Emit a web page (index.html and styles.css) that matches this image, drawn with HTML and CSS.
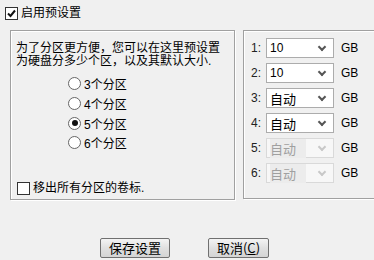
FILE: index.html
```html
<!DOCTYPE html>
<html lang="zh-CN">
<head>
  <meta charset="UTF-8" />
  <title>预设置</title>
  <link rel="stylesheet" href="styles.css">
</head>
<body>

  <label class="check enable">
    <span class="box">
      <svg width="11" height="11" viewBox="0 0 11 11"><polyline points="2,5.5 4.5,8 9,2.5" fill="none" stroke="#111" stroke-width="2"/></svg>
    </span>
    启用预设置
  </label>

  <div class="panes">
    <div class="group left">
      <p class="intro">为了分区更方便，您可以在这里预设置<br>为硬盘分多少个区，以及其默认大小.</p>

      <div class="radios">
        <div class="radio"><span class="dot"></span>3个分区</div>
        <div class="radio"><span class="dot"></span>4个分区</div>
        <div class="radio on"><span class="dot"></span>5个分区</div>
        <div class="radio"><span class="dot"></span>6个分区</div>
      </div>

      <label class="check remove">
        <span class="box"></span>
        移出所有分区的卷标.
      </label>
    </div>

    <div class="group right">
      <div class="row"><span class="num">1:</span><div class="combo"><span class="val">10</span><span class="arrow"></span></div><span class="unit">GB</span></div>
      <div class="row"><span class="num">2:</span><div class="combo"><span class="val">10</span><span class="arrow"></span></div><span class="unit">GB</span></div>
      <div class="row"><span class="num">3:</span><div class="combo"><span class="val cn">自动</span><span class="arrow"></span></div><span class="unit">GB</span></div>
      <div class="row"><span class="num">4:</span><div class="combo"><span class="val cn">自动</span><span class="arrow"></span></div><span class="unit">GB</span></div>
      <div class="row"><span class="num">5:</span><div class="combo off"><span class="val cn">自动</span><span class="arrow"></span></div><span class="unit">GB</span></div>
      <div class="row"><span class="num">6:</span><div class="combo off"><span class="val cn">自动</span><span class="arrow"></span></div><span class="unit">GB</span></div>
    </div>
  </div>

  <div class="actions">
    <button class="btn save">保存设置</button>
    <button class="btn cancel">取消(<u>C</u>)</button>
  </div>

</body>
</html>
```

FILE: styles.css
```css
body {
  margin: 0;
  width: 374px;
  height: 260px;
  overflow: hidden;
  background: #f0f0f0;
  font-family: "Liberation Sans", "Noto Sans CJK SC", sans-serif;
  font-size: 12px;
  color: #000;
}

.check {
  display: flex;
  align-items: center;
  gap: 3px;
  line-height: 14px;
}

.box {
  width: 11px;
  height: 11px;
  border: 1px solid #333;
  background: #fff;
  display: flex;
}

.enable {
  padding: 6px 0 0 5px;
}

.panes {
  display: flex;
  gap: 8px;
  margin-top: 10px;
  padding-left: 10px;
}

.group {
  border: 1px solid #a0a0a0;
  box-shadow: inset 1px 1px 0 #fff, 1px 1px 0 #fff;
  box-sizing: border-box;
}

.left {
  width: 225px;
  height: 170px;
  padding: 11px 0 0 5px;
  display: flex;
  flex-direction: column;
}

.intro {
  margin: 0;
  line-height: 13px;
}

.radios {
  margin: 6px 0 0 52px;
}

.radio {
  display: flex;
  align-items: center;
  gap: 3px;
  height: 19.7px;
}

.dot {
  width: 11px;
  height: 11px;
  border: 1px solid #666;
  border-radius: 50%;
  background: #fff;
  display: flex;
  align-items: center;
  justify-content: center;
}

.radio.on .dot::after {
  content: "";
  width: 6px;
  height: 6px;
  border-radius: 50%;
  background: #111;
}

.remove {
  margin-top: auto;
  margin-bottom: 4px;
  padding-left: 1px;
}

.right {
  flex: 1;
  height: 169px;
  margin-right: -10px;
  padding: 7px 0 0 7px;
  display: flex;
  flex-direction: column;
  gap: 5px;
}

.row {
  display: flex;
  align-items: center;
  height: 20px;
}

.num {
  width: 15px;
  color: #222;
}

.combo {
  width: 68px;
  height: 20px;
  box-sizing: border-box;
  border: 1px solid #acacac;
  background: #fff;
  display: flex;
  align-items: center;
  justify-content: space-between;
  padding: 0 4px 0 3px;
}

.val {
  font-size: 12px;
}

.val.cn {
  font-size: 13px;
}

.arrow {
  width: 4px;
  height: 4px;
  border-right: 2px solid #555;
  border-bottom: 2px solid #555;
  transform: rotate(45deg);
  margin: -3px 4px 0 0;
}

.combo.off {
  border-color: #d9d9d9;
  background: #f7f7f7;
}

.combo.off .val {
  color: #a0a0a0;
  background: #ececec;
  padding-right: 10px;
}

.combo.off .arrow {
  border-color: #c8c8c8;
}

.unit {
  margin-left: 7px;
}

.actions {
  display: flex;
  gap: 38px;
  margin-top: 38px;
  padding-left: 100px;
}

.btn {
  height: 20px;
  border: 1px solid #707070;
  border-radius: 2px;
  background: linear-gradient(#f4f4f4, #e0e0e0 50%, #d4d4d4);
  font-family: "Noto Sans CJK SC", sans-serif;
  font-size: 13px;
  line-height: 16px;
  padding: 0;
  color: #000;
}

.save {
  width: 70px;
}

.cancel {
  width: 61px;
}
```
